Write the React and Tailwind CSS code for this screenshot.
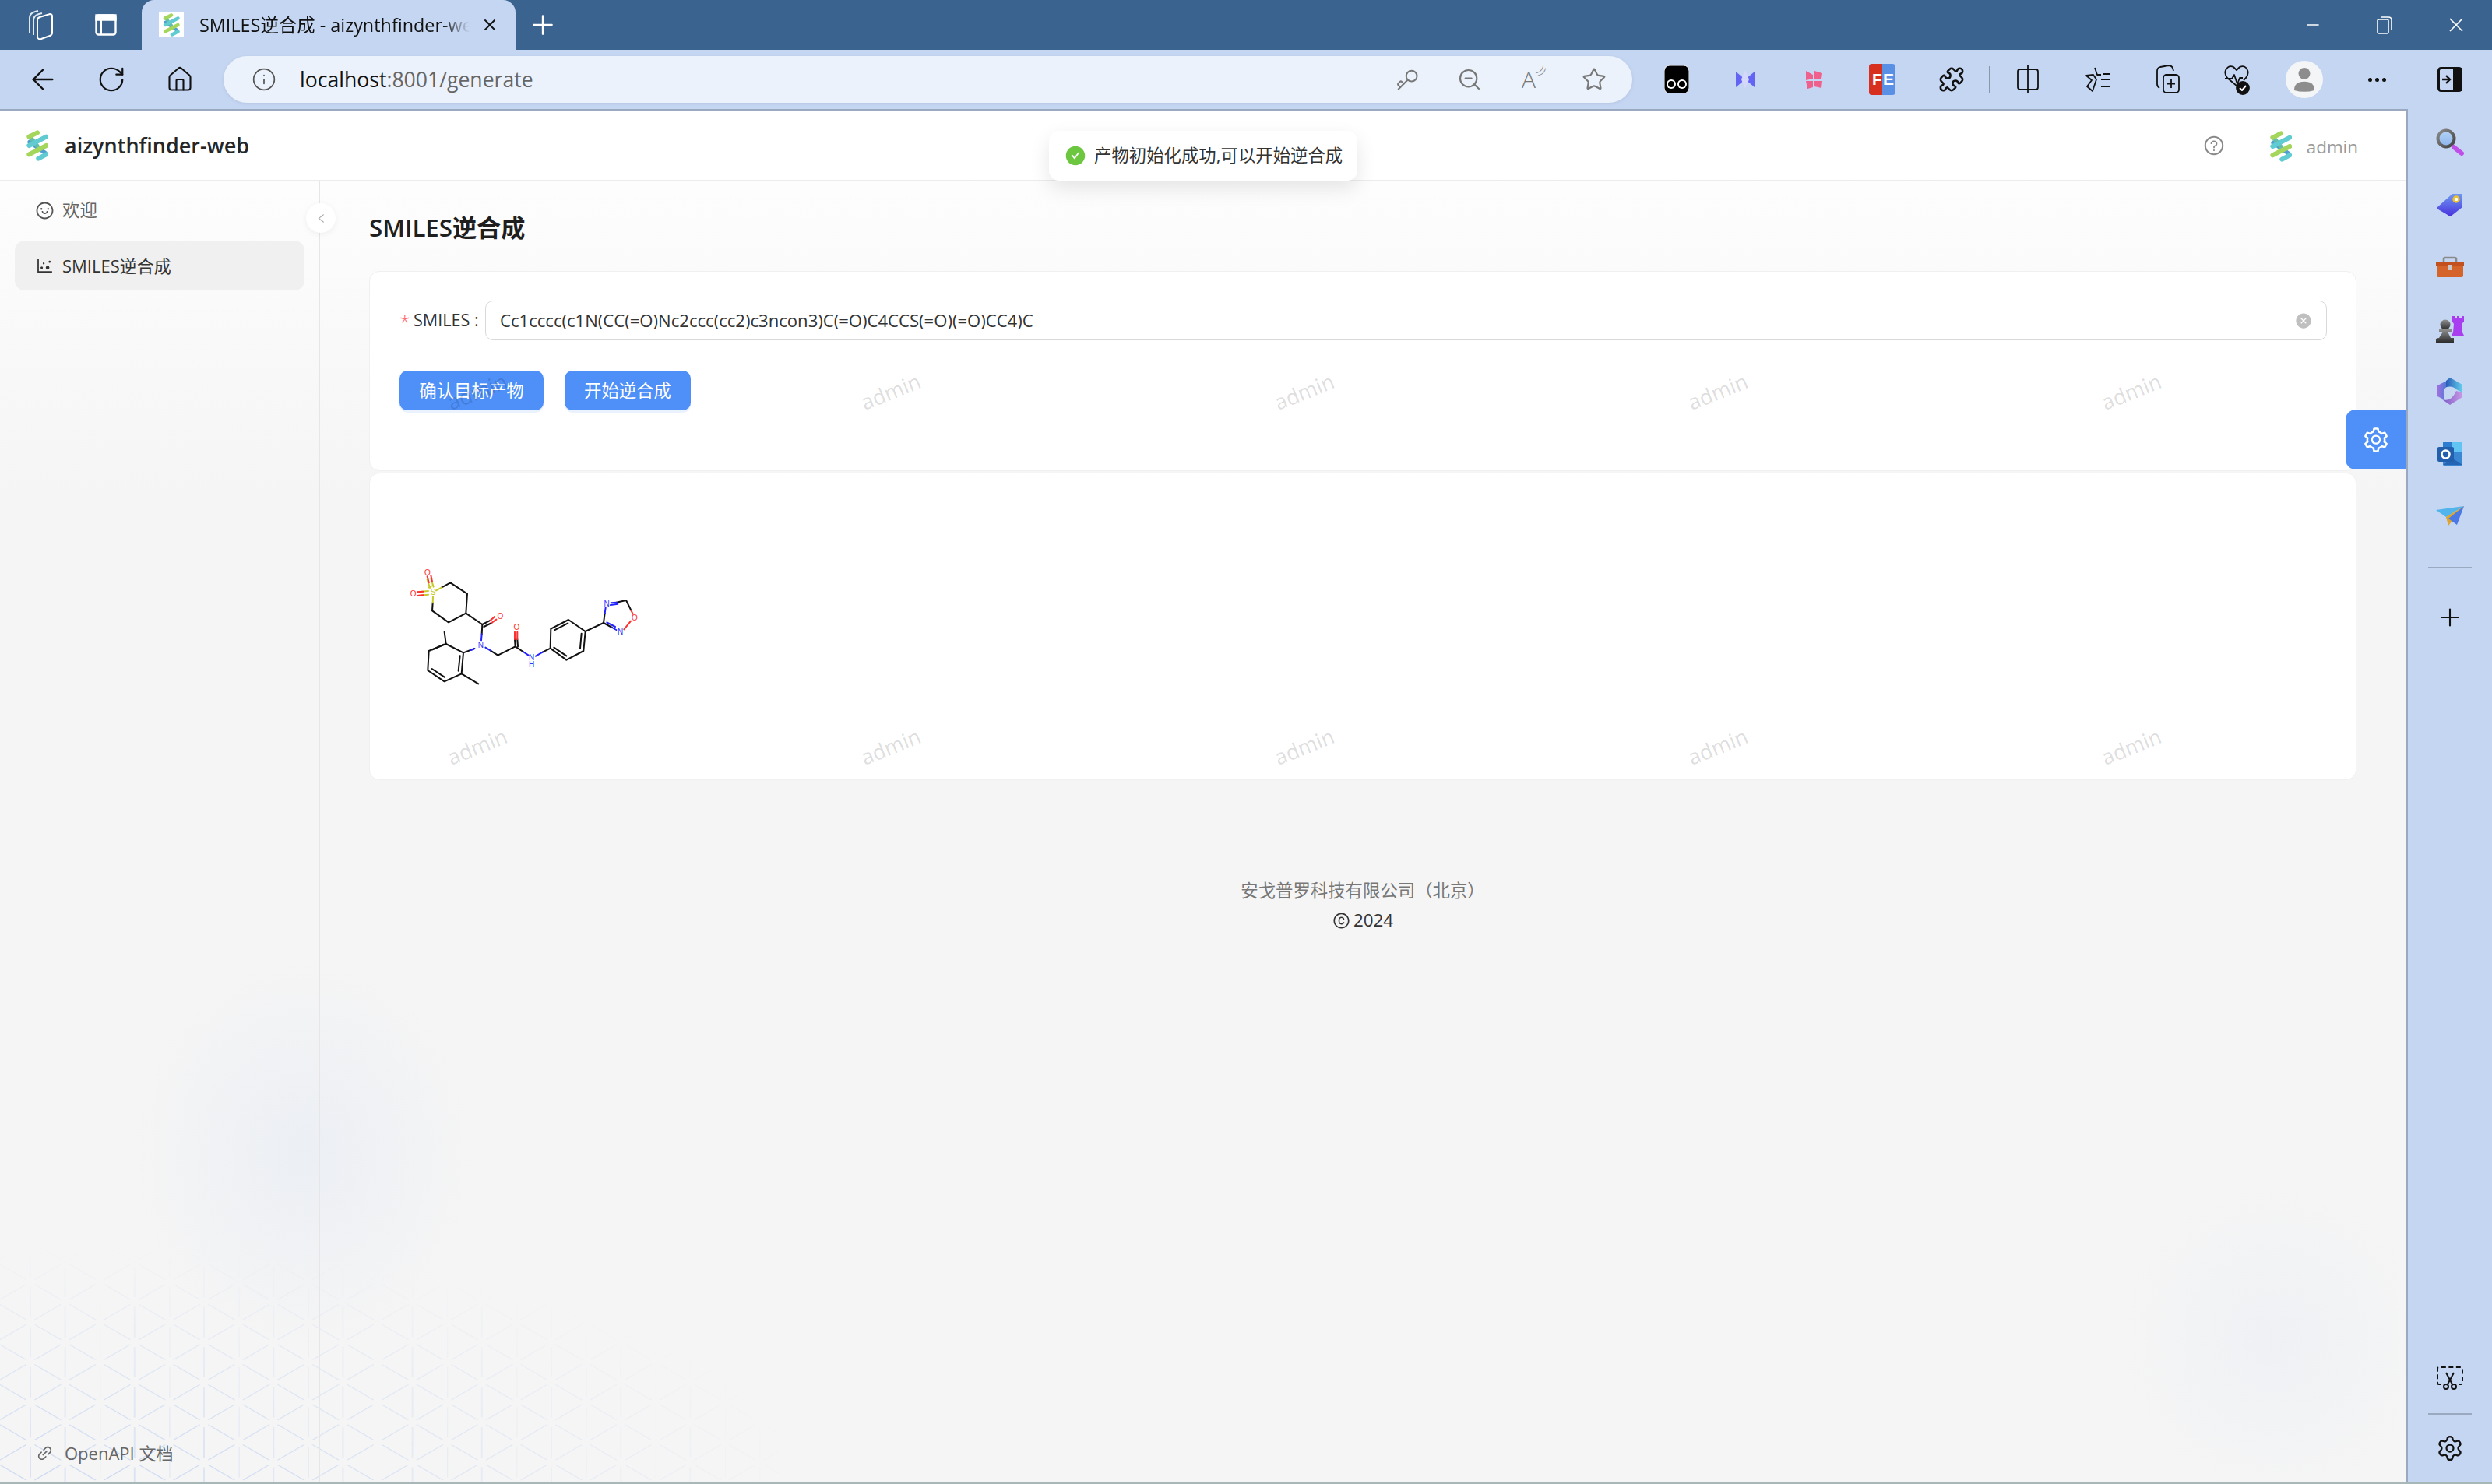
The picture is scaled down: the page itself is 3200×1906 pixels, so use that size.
import React from 'react'
import {
  ArrowLeft, RotateCw, Home, Info, Key, ZoomOut, Star, Puzzle, Plus, X, Minus, Settings,
} from 'lucide-react'
import {
  AiOutlineSmile, AiOutlineDotChart, AiOutlineLink, AiOutlineQuestionCircle, AiFillCheckCircle,
  AiOutlineCopyright, AiOutlineLeft, AiFillCloseCircle, AiOutlineSetting,
} from 'react-icons/ai'

const uiFont = 'font-["Open_Sans","Noto_Sans_CJK_SC",sans-serif]'

function Logo({ className }) {
  return (
    <svg viewBox="0 0 84 120" className={className} fill="none" strokeLinecap="round">
      <path d="M12 46 L72 88" stroke="#4f9fd0" strokeWidth="16" />
      <path d="M12 24 L42 62" stroke="#63bda8" strokeWidth="16" />
      <path d="M10 26 L42 10" stroke="#a5d65c" strokeWidth="18" />
      <path d="M10 60 L76 26" stroke="#60cbd0" strokeWidth="18" />
      <path d="M10 94 L76 60" stroke="#a5d65c" strokeWidth="18" />
      <path d="M46 110 L76 94" stroke="#60cbd0" strokeWidth="18" />
    </svg>
  )
}

function Molecule() {
  const black = [
    'M262 400 L295 382 L360 425 L355 500 L288 535 L225 490 L227 460',
    'M355 500 L418 543 L416 580',
    'M388 636 L345 652 L278 618 L212 645 L208 720 L272 763 L338 733 L345 652',
    'M278 618 L272 572', 'M338 733 L403 772',
    'M450 644 L478 662 L545 628 L575 648',
    'M545 628 L543 600', 'M555 628 L553 600', 'M418 543 L450 527', 'M424 552 L454 537',
    'M650 650 L680 635 L682 560 L750 525 L815 570 L808 645 L742 680 L680 635',
    'M696 565 L748 538', 'M800 578 L795 635', 'M694 632 L742 664',
    'M815 570 L885 537 L890 500', 'M885 537 L918 555', 'M935 458 L972 450 L992 490',
    'M226 640 L270 620', 'M224 714 L272 746', 'M326 722 L332 664',
  ]
  const blue = [
    'M416 580 L414 604', 'M388 636 L374 642', 'M450 644 L430 632', 'M575 648 L596 662', 'M624 665 L650 650',
    'M890 500 L893 478', 'M914 460 L935 458', 'M918 555 L934 564', 'M912 468 L940 464', 'M898 535 L930 552',
  ]
  const labels = [
    ['O', 207, 344, '#ff3030'], ['O', 152, 425, '#ff3030'], ['S', 228, 418, '#c9c92a'], ['O', 487, 511, '#ff3030'],
    ['O', 550, 553, '#ff3030'], ['N', 412, 622, '#3535ff'], ['N', 608, 670, '#3535ff'], ['H', 608, 697, '#3535ff'],
    ['N', 897, 462, '#3535ff'], ['O', 1005, 517, '#ff3030'], ['N', 950, 572, '#3535ff'],
  ]
  return (
    <svg viewBox="0 0 1200 900" className="w-[400px] h-[300px]" fill="none" strokeWidth="6" strokeLinecap="round" strokeLinejoin="round">
      {black.map((d) => <path key={d} d={d} stroke="#111" />)}
      {blue.map((d) => <path key={d} d={d} stroke="#2222ff" />)}
      <path d="M240 412 L262 400 M227 460 L228 436 M212 400 L222 395 M206 370 L216 402 M220 366 L230 398 M168 418 L210 414 M168 432 L210 428" stroke="#c9c92a" />
      <path d="M206 358 L212 382 M220 354 L225 378 M168 418 L190 416 M168 432 L190 430 M465 513 L450 527 M472 524 L454 537 M543 600 L543 572 M553 600 L553 572 M992 490 L998 503 M964 562 L990 530" stroke="#ff3030" />
      {labels.map(([t, x, y, c]) => (
        <text key={`${t}${x}`} x={x} y={y + 11} fill={c} stroke="none" fontSize="30" textAnchor="middle" fontFamily="Liberation Sans, sans-serif">{t}</text>
      ))}
    </svg>
  )
}

function IsoPattern() {
  const w = 44.6
  const h = 51.5
  const raw = [
    [0, 0, 0, h], [0, h, 0, 2 * h], [w, h / 2, w, 1.5 * h], [w, 1.5 * h, w, 2.5 * h], [w, -h / 2, w, h / 2],
    [0, 0, w, h / 2], [w, h / 2, 0, h], [0, h, w, 1.5 * h], [w, 1.5 * h, 0, 2 * h],
    [w, h / 2, 2 * w, 0], [2 * w, h, w, h / 2], [w, 1.5 * h, 2 * w, h], [2 * w, 2 * h, w, 1.5 * h],
  ]
  const segs = raw.map(([a, b, c, d]) => {
    const k = 0.12
    return `M${a + (c - a) * k} ${b + (d - b) * k} L${c - (c - a) * k} ${d - (d - b) * k}`
  })
  return (
    <svg className="absolute left-0 bottom-0 w-[1000px] h-[320px] pointer-events-none" fill="none">
      <defs>
        <pattern id="iso" width={2 * w} height={2 * h} patternUnits="userSpaceOnUse" x="39" y="11">
          {segs.map((d) => <path key={d} d={d} stroke="#c4d4f2" strokeWidth="1.2" />)}
        </pattern>
        <radialGradient id="fade" cx="0.1" cy="1" r="0.95">
          <stop offset="0" stopColor="#fff" stopOpacity="0.95" />
          <stop offset="0.6" stopColor="#fff" stopOpacity="0.4" />
          <stop offset="1" stopColor="#fff" stopOpacity="0" />
        </radialGradient>
        <mask id="isoMask"><rect width="1000" height="320" fill="url(#fade)" /></mask>
      </defs>
      <rect width="1000" height="320" fill="url(#iso)" mask="url(#isoMask)" />
    </svg>
  )
}

function Btn({ children, className = 'w-[90px]' }) {
  return <div className={`${className} h-full shrink-0 flex items-center justify-center`}>{children}</div>
}

const line = { strokeWidth: 1.6, size: 30 }

function ChromeTabs() {
  return (
    <div className="h-[64px] shrink-0 bg-[#3a638f] flex text-white">
      <Btn className="w-[84px] ml-[10px]">
        <svg viewBox="0 0 34 40" className="w-[34px] h-[40px]" fill="none" stroke="#fff" strokeWidth="2">
          <path d="M3 30 V11 Q3 5 10 3 L14 2 M8 33 V14 Q8 8 15 6 L19 5" opacity="0.85" />
          <path d="M13 14 Q13 11 16 10 L29 6 Q32 6 32 9 V30 Q32 33 29 34 L18 38 Q13 39 13 35 Z" />
        </svg>
      </Btn>
      <Btn className="w-[84px]">
        <svg viewBox="0 0 28 28" className="w-[28px] h-[28px]" fill="none" stroke="#fff" strokeWidth="2.4">
          <rect x="1.5" y="1.5" width="25" height="25" rx="3" />
          <path d="M1.5 7.5 H26.5 V1.5 H1.5 Z" fill="#fff" />
          <path d="M8 8 V26" strokeWidth="2" />
        </svg>
      </Btn>
      <div className="ml-[4px] w-[480px] h-full bg-[#c5d6f2] rounded-t-[16px] flex items-center pl-[22px] text-[#111]">
        <div className="w-[32px] h-[32px] bg-white flex items-center justify-center shrink-0">
          <Logo className="w-[24px] h-[30px]" />
        </div>
        <div className="ml-[20px] w-[347px] overflow-hidden whitespace-nowrap text-[23.4px] leading-[32px] [mask-image:linear-gradient(90deg,#000_90%,transparent)]">
          SMILES逆合成 - aizynthfinder-web
        </div>
        <X size={24} strokeWidth={2} className="ml-[14px] shrink-0" />
      </div>
      <Btn className="w-[70px]"><Plus size={40} strokeWidth={1.4} /></Btn>
      <div className="flex-1" />
      <Btn className="w-[92px]"><Minus size={24} strokeWidth={1.6} /></Btn>
      <Btn className="w-[92px]">
        <svg viewBox="0 0 20 24" className="w-[20px] h-[24px]" fill="none" stroke="#fff" strokeWidth="1.6">
          <rect x="1" y="5" width="14" height="18" rx="2" />
          <path d="M5 2 H15 Q19 2 19 6 V18" />
        </svg>
      </Btn>
      <Btn className="w-[92px]"><X size={30} strokeWidth={1.4} /></Btn>
    </div>
  )
}

function Toolbar() {
  return (
    <div className="h-[76px] shrink-0 bg-[#c5d6f2] flex items-center text-[#111]">
      <div className="w-[11px]" />
      <Btn className="w-[88px]"><ArrowLeft size={42} strokeWidth={1.4} /></Btn>
      <Btn className="w-[88px]"><RotateCw size={38} strokeWidth={1.4} /></Btn>
      <Btn className="w-[88px]"><Home size={36} strokeWidth={1.4} /></Btn>
      <div className="ml-[12px] w-[1809px] h-[60px] rounded-full bg-[#ebf2fb] flex items-center shadow-[0_1px_4px_rgba(60,80,120,0.12)]">
        <Info size={32} strokeWidth={1.3} className="ml-[36px] text-[#555]" />
        <div className="ml-[30px] text-[26.6px] leading-[36px] text-[#666]"><span className="text-[#111]">localhost</span>:8001/generate</div>
        <div className="flex-1" />
        <div className="flex h-full items-center mr-[9px] text-[#777]">
          <Btn className="w-[80px]"><Key {...line} className="rotate-180" /></Btn>
          <Btn className="w-[80px]"><ZoomOut {...line} size={32} /></Btn>
          <Btn className="w-[80px]">
            <div className="relative text-[30px] leading-none font-light pr-[8px]">A<span className="absolute -right-[4px] -top-[4px] text-[15px] rotate-45">))</span></div>
          </Btn>
          <Btn className="w-[80px]"><Star {...line} size={32} /></Btn>
        </div>
      </div>
      <div className="ml-[13px] flex h-full items-center">
        <Btn className="w-[88px]">
          <svg viewBox="0 0 32 36" className="w-[32px] h-[36px]">
            <rect width="32" height="36" rx="7" fill="#000" stroke="#fff" />
            <circle cx="9" cy="24" r="6" fill="#fff" /><circle cx="23" cy="24" r="6" fill="#fff" />
            <circle cx="9" cy="24" r="4" fill="#000" /><circle cx="23" cy="24" r="4" fill="#000" />
          </svg>
        </Btn>
        <Btn className="w-[88px]">
          <svg viewBox="0 0 28 28" className="w-[28px] h-[28px]">
            <path d="M2 4 L14 14 L2 24 Z" fill="#6464f4" /><path d="M26 4 L14 14 L26 24 Z" fill="#6464f4" />
            <path d="M14 2 L19 14 L14 26 L9 14 Z" fill="#d5d8fb" />
          </svg>
        </Btn>
        <Btn className="w-[88px]">
          <svg viewBox="0 0 28 28" className="w-[28px] h-[34px]">
            <path d="M4 3 L13 8 V13 L4 15 Z M15 3 L25 6 L24 13 L15 13 Z M4 16 L13 16 V24 L6 26 Z M15 16 L25 16 L24 25 L15 23 Z" fill="#f0608c" />
          </svg>
        </Btn>
        <Btn className="w-[88px]">
          <div className="relative w-[34px] h-[40px] rounded-[4px] overflow-hidden flex bg-[#5a8fe6] text-white font-bold text-[21px] leading-[40px] font-['Liberation_Sans',sans-serif]">
            <div className="w-[17px] h-full bg-[#d8301f] pl-[4px]">F</div>
            <div className="pl-[1px]">E</div>
          </div>
        </Btn>
        <Btn className="w-[89px]"><Puzzle {...line} strokeWidth={1.8} size={34} /></Btn>
        <div className="w-[1px] h-[34px] bg-[#8a97aa] mx-[4px]" />
        <Btn>
          <svg viewBox="0 0 30 36" className="w-[30px] h-[36px]" fill="none" stroke="#111" strokeWidth="1.8">
            <rect x="2" y="5" width="26" height="26" rx="3" /><path d="M15 0 V36" />
          </svg>
        </Btn>
        <Btn>
          <svg viewBox="0 0 32 34" className="w-[32px] h-[34px]" fill="none" stroke="#111" strokeWidth="1.8" strokeLinejoin="round">
            <path d="M12 2 L15 11 H20 M14 17 L9 32 L2 26 L8 18 L1 12 L10 11 Z M20 17 H31 M20 26 H31 M22 10 H31" />
          </svg>
        </Btn>
        <Btn>
          <svg viewBox="0 0 32 38" className="w-[32px] h-[38px]" fill="none" stroke="#111" strokeWidth="1.8">
            <rect x="10" y="13" width="20" height="23" rx="4" /><path d="M20 19 V30 M15 24.5 H25" />
            <path d="M5 30 Q2 28 2 25 V8 Q2 4 6 3 L17 1 Q22 1 23 8" />
          </svg>
        </Btn>
        <Btn className="w-[86px]">
          <svg viewBox="0 0 34 40" className="w-[34px] h-[40px]" fill="none" stroke="#111" strokeWidth="1.8" strokeLinejoin="round">
            <path d="M17 28 L5 18 Q1 13 3 8 Q7 1 13 4 L17 8 L21 4 Q28 1 31 8 Q33 13 29 18 L26 21" />
            <path d="M2 19 H11 L14 14 L18 26 L21 18 H25" />
            <circle cx="25" cy="31" r="8" fill="#111" /><path d="M21 31 L24 34 L29 28" stroke="#fff" strokeWidth="2" />
          </svg>
        </Btn>
        <Btn className="w-[88px]">
          <div className="w-[48px] h-[48px] rounded-full bg-[#f4f5f7] flex items-center justify-center">
            <svg viewBox="0 0 30 34" className="w-[28px] h-[32px]" fill="#8d8d8d">
              <circle cx="15" cy="9" r="8" /><path d="M1 32 Q1 20 15 20 Q29 20 29 32 Q22 34 15 34 Q8 34 1 32 Z" />
            </svg>
          </div>
        </Btn>
        <Btn className="w-[98px]">
          <div className="flex gap-[4px]">
            <div className="w-[5px] h-[5px] bg-[#111] rounded-full" /><div className="w-[5px] h-[5px] bg-[#111] rounded-full" /><div className="w-[5px] h-[5px] bg-[#111] rounded-full" />
          </div>
        </Btn>
        <Btn>
          <svg viewBox="0 0 32 32" className="w-[32px] h-[32px]">
            <rect x="1.5" y="1.5" width="29" height="29" rx="3" fill="none" stroke="#111" strokeWidth="3" />
            <rect x="20" y="1" width="11" height="30" fill="#111" />
            <path d="M6 16 H15 M11 11 L16 16 L11 21" stroke="#111" strokeWidth="2.4" fill="none" />
          </svg>
        </Btn>
      </div>
    </div>
  )
}

function SidePanel() {
  const cell = 'h-[80px] shrink-0 flex items-center justify-center'
  return (
    <div className="w-[108px] shrink-0 bg-[#c5d6f2] flex flex-col">
      <div className={`${cell} mt-[3px]`}>
        <svg viewBox="0 0 36 36" className="w-[36px] h-[36px]">
          <defs>
            <linearGradient id="lens" x1="0" y1="0" x2="0" y2="1"><stop offset="0" stopColor="#b4d4f6" /><stop offset="1" stopColor="#8cb4ec" /></linearGradient>
            <linearGradient id="ring" x1="0" y1="0" x2="1" y2="1"><stop offset="0" stopColor="#8c8c8c" /><stop offset="1" stopColor="#404040" /></linearGradient>
          </defs>
          <circle cx="13" cy="13" r="10.5" fill="url(#lens)" stroke="url(#ring)" strokeWidth="4" />
          <path d="M23 24 L33 32" stroke="#c04ee8" strokeWidth="6" strokeLinecap="round" />
        </svg>
      </div>
      <div className={cell}>
        <svg viewBox="0 0 34 30" className="w-[34px] h-[32px]">
          <defs><linearGradient id="tag" x1="0" y1="0" x2="0" y2="1"><stop offset="0" stopColor="#6e98f4" /><stop offset="1" stopColor="#4a34dc" /></linearGradient></defs>
          <path d="M1 18 L20 1 H33 V18 L19 29 Q16 30 14 28 L2 21 Q0 19 1 18 Z" fill="url(#tag)" />
          <circle cx="25" cy="8" r="3.5" fill="#fff" stroke="#eec02a" strokeWidth="2.5" />
        </svg>
      </div>
      <div className={cell}>
        <svg viewBox="0 0 36 28" className="w-[36px] h-[28px]">
          <path d="M10 8 V4 Q10 2 12 2 H24 Q26 2 26 4 V8" fill="none" stroke="#8a8a8a" strokeWidth="2.6" />
          <path d="M0 7 H36 V13 H0 Z" fill="#c2511f" />
          <path d="M1 13 H35 V25 Q35 27 33 27 H3 Q1 27 1 25 Z" fill="#d4642a" />
          <rect x="15" y="11" width="6" height="7" fill="#c8c8c8" />
        </svg>
      </div>
      <div className={cell}>
        <svg viewBox="0 0 36 36" className="w-[36px] h-[36px]">
          <defs><linearGradient id="pawn" x1="0" y1="0" x2="0" y2="1"><stop offset="0" stopColor="#909090" /><stop offset="1" stopColor="#2c2c2c" /></linearGradient></defs>
          <path d="M21 1 H24 V4 H27 V1 H30 V4 H33 V1 H36 V8 L33 11 L34 22 L36 26 H20 L22 22 L23 11 L21 8 Z" fill="#a83ef0" />
          <circle cx="12" cy="12" r="6.5" fill="url(#pawn)" />
          <path d="M4 18 H20 V21 H15 L19 29 H23 V35 H0 V31 Q0 29 4 29 L9 21 H4 Z" fill="url(#pawn)" />
        </svg>
      </div>
      <div className={cell}>
        <svg viewBox="0 0 32 36" className="w-[32px] h-[36px]">
          <defs>
            <linearGradient id="m1" x1="0" y1="0" x2="1" y2="0"><stop offset="0" stopColor="#a070e0" /><stop offset="1" stopColor="#4c7ad6" /></linearGradient>
            <linearGradient id="m2" x1="0" y1="0" x2="1" y2="0"><stop offset="0" stopColor="#2a5cb8" /><stop offset="1" stopColor="#62d0ee" /></linearGradient>
            <linearGradient id="m3" x1="0" y1="0" x2="1" y2="0"><stop offset="0" stopColor="#7a5cc8" /><stop offset="1" stopColor="#c898e4" /></linearGradient>
          </defs>
          <path d="M0 10 L12 4 V12 Q7 15 8 20 L8 28 L0 24 Z" fill="url(#m1)" />
          <path d="M11 4 L16 0 L32 9 V19 L24 15 Q20 10 11 12 Z" fill="url(#m2)" />
          <path d="M32 19 V25 L16 35 L6 28 Q14 30 18 26 Q22 22 24 17 Z" fill="url(#m3)" />
        </svg>
      </div>
      <div className={cell}>
        <svg viewBox="0 0 32 32" className="w-[32px] h-[32px]">
          <rect x="7" y="1" width="25" height="15" fill="#62c4f2" />
          <rect x="7" y="1" width="12" height="10" fill="#2c7cd0" />
          <path d="M7 14 H32 V30 Q32 31 30 31 H9 Q7 31 7 30 Z" fill="#3a88d4" />
          <path d="M7 30 L20 22 L32 30" fill="#2566b4" />
          <rect x="0" y="7" width="21" height="19" rx="2" fill="#2260ae" />
          <circle cx="10.5" cy="16.5" r="5" fill="none" stroke="#fff" strokeWidth="2.6" />
        </svg>
      </div>
      <div className={cell}>
        <svg viewBox="0 0 36 26" className="w-[36px] h-[26px]">
          <path d="M0 5 L36 0 L13 14 Z" fill="#52b4ec" />
          <path d="M13 14 L36 0 L16 25 Z" fill="#e0a52c" />
          <path d="M16 16 L36 0 L27 24 Z" fill="#4a78e4" />
        </svg>
      </div>
      <div className="mx-[26px] mt-[25px] h-[2px] bg-[#9aa8c0]" />
      <div className={`${cell} mt-[23px] text-[#111]`}><Plus size={36} strokeWidth={1.4} /></div>
      <div className="flex-1" />
      <div className={`${cell} mb-[5px]`}>
        <svg viewBox="0 0 34 30" className="w-[34px] h-[30px]" fill="none" stroke="#111" strokeWidth="2">
          <path d="M5 23 H3 Q1 23 1 21 V3 Q1 1 3 1 H31 Q33 1 33 3 V21 Q33 23 31 23 H29" strokeDasharray="6 3.5" />
          <path d="M12 8 L20 23 M22 8 L14 23" />
          <circle cx="12" cy="26" r="3" /><circle cx="22" cy="26" r="3" />
        </svg>
      </div>
      <div className="mx-[26px] mb-[3px] h-[2px] bg-[#9aa8c0] shrink-0" />
      <div className={`${cell} mb-[4px] text-[#111]`}><Settings size={36} strokeWidth={1.5} /></div>
    </div>
  )
}

function Watermarks() {
  const items = Array.from({ length: 10 }, (_, i) => i)
  return (
    <div className="absolute -left-[127px] -top-[73px] grid grid-cols-[repeat(5,531px)] auto-rows-[456px] pointer-events-none">
      {items.map((i) => (
        <div key={i} className="flex items-center justify-center">
          <span className="-rotate-[22deg] text-[27px] text-black/15">admin</span>
        </div>
      ))}
    </div>
  )
}

function Page() {
  return (
    <div className={`${uiFont} relative flex-1 min-w-0 flex flex-col border-t-2 border-r-[3px] border-[#9aa8c0] bg-[linear-gradient(#fff,#f5f5f5_28%)] overflow-hidden text-[22.4px]`}>
      <div className="absolute left-[170px] top-[1090px] w-[440px] h-[500px] rounded-full bg-[radial-gradient(closest-side,rgba(176,200,238,0.14),transparent)]" />
      <div className="absolute left-[2720px] top-[1380px] w-[400px] h-[400px] rounded-full bg-[radial-gradient(closest-side,rgba(190,212,240,0.12),transparent)]" />
      <IsoPattern />

      <header className="relative h-[90px] shrink-0 bg-white border-b border-[#ececec] flex items-center pl-[34px]">
        <Logo className="w-[28px] h-[40px]" />
        <div className="ml-[21px] text-[27px] font-semibold text-[#262626] pt-[1px]">aizynthfinder-web</div>
        <div className="flex-1" />
        <AiOutlineQuestionCircle size={28} className="text-[#888] mr-[58px]" />
        <Logo className="w-[28px] h-[40px] mt-[2px]" />
        <div className="ml-[19px] mr-[61px] text-[22.4px] text-[#999] pt-[4px]">admin</div>
        <div className="absolute left-[1347px] top-[26px] w-[396px] h-[64px] rounded-[13px] bg-white shadow-[0_10px_26px_rgba(0,0,0,0.1)] flex items-center pl-[20px] text-[#333]">
          <AiFillCheckCircle size={28} className="text-[#6cc63f]" />
          <span className="ml-[10px] whitespace-nowrap">产物初始化成功,可以开始逆合成</span>
        </div>
      </header>

      <div className="relative flex-1 min-h-0 flex">
        <aside className="relative w-[411px] shrink-0 border-r border-[#e6e6e6] flex flex-col text-[#555]">
          <div className="mx-[19px] mt-[6px] h-[64px] flex items-center pl-[26px]">
            <AiOutlineSmile size={25} />
            <span className="ml-[10px] text-[#666]">欢迎</span>
          </div>
          <div className="mx-[19px] mt-[7px] h-[64px] rounded-[13px] bg-[#f0f0f0] flex items-center pl-[26px] text-[#333]">
            <AiOutlineDotChart size={25} />
            <span className="ml-[10px] text-[22px]">SMILES逆合成</span>
          </div>
          <div className="flex-1" />
          <div className="flex items-center pl-[46px] mb-[20px] h-[36px] text-[#666]">
            <AiOutlineLink size={23} />
            <span className="ml-[14px] text-[22px]">OpenAPI 文档</span>
          </div>
          <div className="absolute -right-[21px] top-[29px] w-[38px] h-[38px] rounded-full bg-white shadow-[0_2px_8px_rgba(0,0,0,0.06)] flex items-center justify-center text-[#aaa]">
            <AiOutlineLeft size={15} />
          </div>
        </aside>

        <main className="relative flex-1 min-w-0 pl-[63px] pr-[63px]">
          <div className="mt-[38px] h-[44px] mb-[34px] text-[31.2px] leading-[44px] font-semibold text-[#1f1f1f]">SMILES逆合成</div>
          <div className="relative">
            <div className="h-[257px] bg-white rounded-[13px] border border-[#f0f0f0] pt-[37px] pl-[38px] pr-[37px]">
              <div className="flex items-center h-[51px]">
                <span className="text-[#ff6a6f] text-[25px] font-light w-[18px] pt-[4px]">*</span>
                <span className="text-[#333] text-[21.6px] w-[92px] whitespace-nowrap">SMILES :</span>
                <div className="flex-1 h-[51px] rounded-[10px] border border-[#d9d9d9] flex items-center px-[18px] text-[#333] text-[22.1px]">
                  <span className="flex-1">Cc1cccc(c1N(CC(=O)Nc2ccc(cc2)c3ncon3)C(=O)C4CCS(=O)(=O)CC4)C</span>
                  <AiFillCloseCircle size={22} className="text-[#bfbfbf]" />
                </div>
              </div>
              <div className="mt-[39px] flex items-center">
                <div className="w-[185px] h-[51px] rounded-[10px] bg-[#4e8ff8] text-white flex items-center justify-center shadow-[0_3px_0_rgba(80,145,250,0.12)]">确认目标产物</div>
                <div className="w-[1px] h-[30px] bg-[#eee] mx-[13px]" />
                <div className="w-[162px] h-[51px] rounded-[10px] bg-[#4e8ff8] text-white flex items-center justify-center shadow-[0_3px_0_rgba(80,145,250,0.12)]">开始逆合成</div>
              </div>
            </div>
            <div className="mt-[2px] h-[395px] bg-white rounded-[13px] border border-[#f0f0f0] pl-[5px] pt-[13px]">
              <Molecule />
            </div>
            <Watermarks />
          </div>
          <div className="mt-[126px] text-center">
            <div className="text-[#777] leading-[32px]">安戈普罗科技有限公司（北京）</div>
            <div className="mt-[6px] text-[#333] leading-[32px] flex items-center justify-center gap-[4px]">
              <AiOutlineCopyright size={23} />2024
            </div>
          </div>
        </main>
      </div>

      <div className="absolute right-0 top-[384px] w-[77px] h-[77px] rounded-l-[13px] bg-[#4e8ff8] flex items-center justify-center text-white">
        <AiOutlineSetting size={36} />
      </div>
    </div>
  )
}

export default function App() {
  return (
    <div className={`${uiFont} w-[3200px] h-[1906px] flex flex-col overflow-hidden`}>
      <ChromeTabs />
      <Toolbar />
      <div className="flex-1 min-h-0 flex">
        <Page />
        <SidePanel />
      </div>
      <div className="h-[2px] shrink-0 bg-[#a8b8b8]" />
    </div>
  )
}
